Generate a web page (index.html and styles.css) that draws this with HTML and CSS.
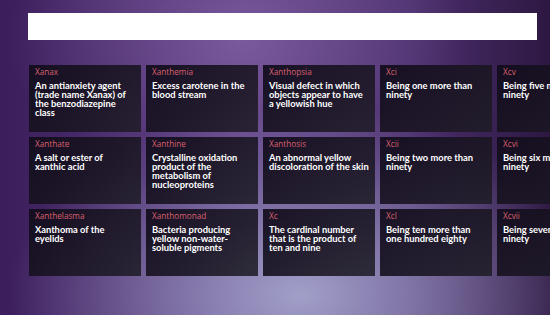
FILE: index.html
```html
<!DOCTYPE html>
<html>
<head>
<meta charset="utf-8">
<link rel="stylesheet" href="styles.css">
</head>
<body>
<div class="page">
  <div class="searchbar"></div>
  <div class="grid">
    <div class="tile"><div class="term">Xanax</div><div class="def">An antianxiety agent (trade name Xanax) of the benzodiazepine class</div></div>
    <div class="tile"><div class="term">Xanthemia</div><div class="def">Excess carotene in the blood stream</div></div>
    <div class="tile"><div class="term">Xanthopsia</div><div class="def">Visual defect in which objects appear to have a yellowish hue</div></div>
    <div class="tile"><div class="term">Xci</div><div class="def">Being one more than ninety</div></div>
    <div class="tile"><div class="term">Xcv</div><div class="def">Being five more than ninety</div></div>

    <div class="tile"><div class="term">Xanthate</div><div class="def">A salt or ester of xanthic acid</div></div>
    <div class="tile"><div class="term">Xanthine</div><div class="def">Crystalline oxidation product of the metabolism of nucleoproteins</div></div>
    <div class="tile"><div class="term">Xanthosis</div><div class="def">An abnormal yellow discoloration of the skin</div></div>
    <div class="tile"><div class="term">Xcii</div><div class="def">Being two more than ninety</div></div>
    <div class="tile"><div class="term">Xcvi</div><div class="def">Being six more than ninety</div></div>

    <div class="tile"><div class="term">Xanthelasma</div><div class="def">Xanthoma of the eyelids</div></div>
    <div class="tile"><div class="term">Xanthomonad</div><div class="def">Bacteria producing yellow non-water-soluble pigments</div></div>
    <div class="tile"><div class="term">Xc</div><div class="def">The cardinal number that is the product of ten and nine</div></div>
    <div class="tile"><div class="term">Xcl</div><div class="def">Being ten more than one hundred eighty</div></div>
    <div class="tile"><div class="term">Xcvii</div><div class="def">Being seven more than ninety</div></div>
  </div>
</div>
</body>
</html>
```
FILE: styles.css
```css
html, body {
  margin: 0;
  padding: 0;
  width: 550px;
  height: 315px;
  overflow: hidden;
}
body {
  background:
    radial-gradient(ellipse 290px 190px at 300px 295px, rgba(165,165,205,0.95), rgba(165,165,205,0) 100%),
    radial-gradient(ellipse 230px 150px at 240px 40px, rgba(150,115,180,0.55), rgba(150,115,180,0) 100%),
    linear-gradient(90deg, #3c1e5c 0%, #58397e 45%, #4a2e6c 75%, #2e1842 100%);
  font-family: "Lato", "Open Sans", sans-serif;
}
.page {
  padding: 13px 0 0 28px;
}
.searchbar {
  width: 509px;
  height: 27px;
  background: #ffffff;
}
.grid {
  margin-top: 25px;
  margin-left: 1px;
  display: grid;
  grid-template-columns: repeat(5, 112px);
  grid-auto-rows: 67px;
  gap: 5px;
  width: 600px;
}
.tile {
  background: linear-gradient(135deg, rgba(18,12,28,0.93), rgba(30,28,38,0.86));
  padding: 2px 6px 0 6px;
  box-sizing: border-box;
  overflow: hidden;
}
.term {
  color: #d8606e;
  font-size: 8.2px;
  line-height: 10px;
  font-family: "Open Sans", sans-serif;
}
.def {
  color: #ffffff;
  font-size: 9.35px;
  line-height: 9px;
  font-weight: 700;
  margin-top: 4px;
}
```
